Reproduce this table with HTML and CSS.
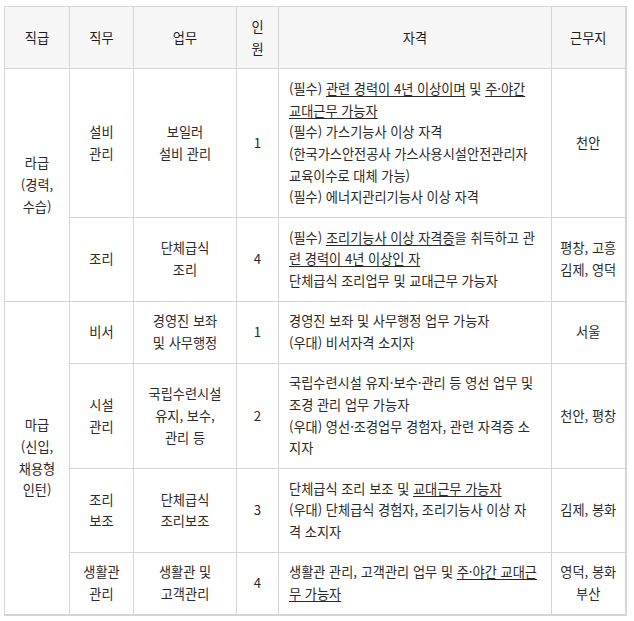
FILE: index.html
```html
<!DOCTYPE html>
<html lang="ko">
<head>
<meta charset="utf-8">
<link rel="stylesheet" href="styles.css">
</head>
<body>
<div class="wrap">
<table class="jobs">
  <colgroup>
    <col class="c-grade"><col class="c-role"><col class="c-task"><col class="c-num"><col class="c-qual"><col class="c-place">
  </colgroup>
  <thead>
    <tr>
      <th>직급</th><th>직무</th><th>업무</th><th>인<br>원</th><th>자격</th><th>근무지</th>
    </tr>
  </thead>
  <tbody>
    <tr>
      <td rowspan="2">라급<br>(경력,<br>수습)</td>
      <td>설비<br>관리</td>
      <td>보일러<br>설비 관리</td>
      <td>1</td>
      <td class="qual">(필수) <u>관련 경력이 4년 이상이며</u> 및 <u>주·야간 <br>교대근무 가능자</u><br>(필수) 가스기능사 이상 자격<br>(한국가스안전공사 가스사용시설안전관리자<br>교육이수로 대체 가능)<br>(필수) 에너지관리기능사 이상 자격</td>
      <td>천안</td>
    </tr>
    <tr>
      <td>조리</td>
      <td>단체급식<br>조리</td>
      <td>4</td>
      <td class="qual">(필수) <u>조리기능사 이상 자격증</u>을 취득하고 관<br><u>련 경력이 4년 이상인 자</u><br>단체급식 조리업무 및 교대근무 가능자</td>
      <td>평창, 고흥<br>김제, 영덕</td>
    </tr>
    <tr>
      <td rowspan="4">마급<br>(신입,<br>채용형<br>인턴)</td>
      <td>비서</td>
      <td>경영진 보좌<br>및 사무행정</td>
      <td>1</td>
      <td class="qual">경영진 보좌 및 사무행정 업무 가능자<br>(우대) 비서자격 소지자</td>
      <td>서울</td>
    </tr>
    <tr>
      <td>시설<br>관리</td>
      <td>국립수련시설<br>유지, 보수,<br>관리 등</td>
      <td>2</td>
      <td class="qual">국립수련시설 유지·보수·관리 등 영선 업무 및<br>조경 관리 업무 가능자<br>(우대) 영선·조경업무 경험자, 관련 자격증 소<br>지자</td>
      <td>천안, 평창</td>
    </tr>
    <tr>
      <td>조리<br>보조</td>
      <td>단체급식<br>조리보조</td>
      <td>3</td>
      <td class="qual">단체급식 조리 보조 및 <u>교대근무 가능자</u><br>(우대) 단체급식 경험자, 조리기능사 이상 자<br>격 소지자</td>
      <td>김제, 봉화</td>
    </tr>
    <tr>
      <td>생활관<br>관리</td>
      <td>생활관 및<br>고객관리</td>
      <td>4</td>
      <td class="qual">생활관 관리, 고객관리 업무 및 <u>주·야간 교대근<br>무 가능자</u></td>
      <td>영덕, 봉화<br>부산</td>
    </tr>
  </tbody>
</table>
</div>
</body>
</html>
```
FILE: styles.css
```css
html, body {
  margin: 0;
  padding: 0;
  background: #ffffff;
}
.wrap {
  padding: 6px 0 0 4px;
}
.jobs {
  border-collapse: collapse;
  table-layout: fixed;
  width: 622px;
  font-family: "Noto Sans CJK KR", "Noto Sans", sans-serif;
  font-size: 13.2px;
  line-height: 21.7px;
  color: #2a2a2a;
  border: 1px solid #d5d5d5;
  border-right-width: 2px;
  border-bottom-width: 2px;
}
.c-grade { width: 65px; }
.c-role { width: 64px; }
.c-task { width: 103px; }
.c-num { width: 42px; }
.c-qual { width: 273px; }
.c-place { width: 74px; }
.jobs th, .jobs td {
  border: 1px solid #d5d5d5;
  padding: 8.8px 8px;
  text-align: center;
  vertical-align: middle;
  white-space: nowrap;
}
.jobs th {
  background: #f7f7f7;
  font-weight: normal;
  color: #1e1e1e;
}
.jobs td.qual {
  text-align: left;
  padding-left: 10px;
}
.jobs u {
  text-decoration: underline;
  text-underline-offset: 2px;
}
```
